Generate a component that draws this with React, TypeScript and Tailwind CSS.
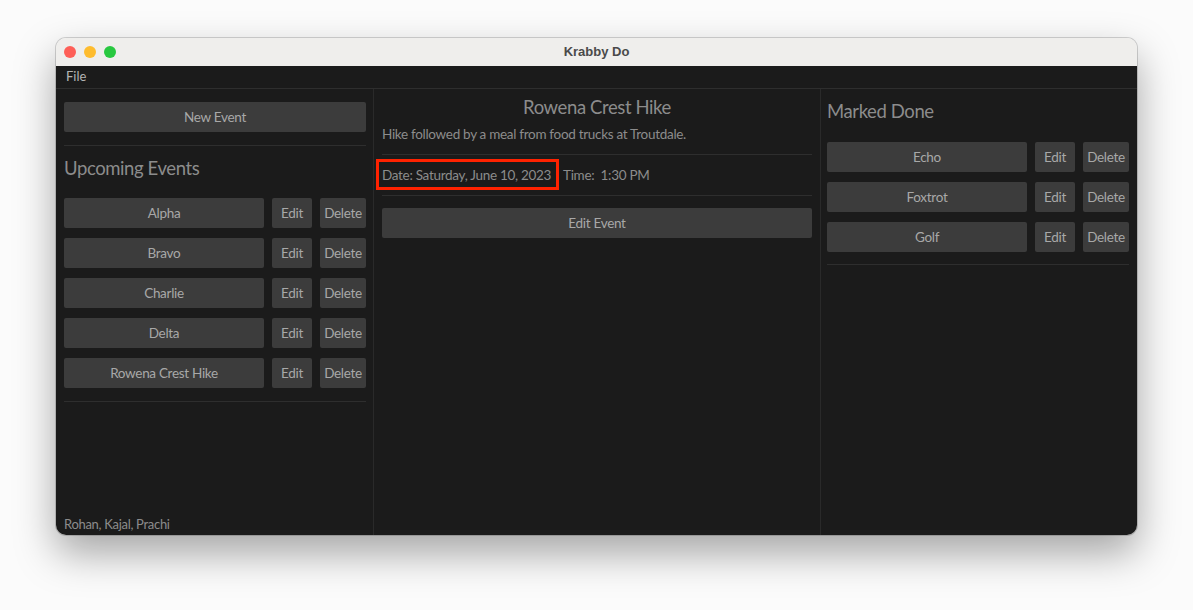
import React from 'react';

const font = { fontFamily: 'Lato, "Open Sans", sans-serif' };

const Separator = () => <div className="h-px bg-[#2e2e2e] w-full" />;

const EventRow = ({ name }: { name: string }) => (
  <div className="flex gap-2 h-[30px]">
    <button className="flex-1 rounded-[2px] bg-[#3c3c3c] text-[13.5px] tracking-[-0.3px] text-[#a8a8a8]">{name}</button>
    <button className="w-[40px] rounded-[2px] bg-[#3c3c3c] text-[13.5px] tracking-[-0.3px] text-[#a8a8a8]">Edit</button>
    <button className="w-[46px] rounded-[2px] bg-[#3c3c3c] text-[13.5px] tracking-[-0.3px] text-[#a8a8a8]">Delete</button>
  </div>
);

export default function App() {
  const upcoming = ['Alpha', 'Bravo', 'Charlie', 'Delta', 'Rowena Crest Hike'];
  const done = ['Echo', 'Foxtrot', 'Golf'];

  return (
    <div className="w-[1193px] h-[610px] bg-[#fbfbfb] pt-[38px] pl-[56px]" style={font}>
      <div className="w-[1081px] h-[497px] rounded-[10px] overflow-hidden flex flex-col shadow-[0_0_0_1px_rgba(0,0,0,0.16),0_18px_40px_rgba(0,0,0,0.35)]">
        {/* title bar */}
        <div className="h-[28px] bg-[#efeeec] flex items-center relative shrink-0">
          <div className="flex gap-2 pl-[8px]">
            <span className="w-3 h-3 rounded-full bg-[#fe5f57]" />
            <span className="w-3 h-3 rounded-full bg-[#febc2e]" />
            <span className="w-3 h-3 rounded-full bg-[#28c840]" />
          </div>
          <div className="absolute inset-0 flex items-center justify-center text-[13px] font-bold text-[#4a4a4a]" style={{ fontFamily: '"Liberation Sans", sans-serif' }}>
            Krabby Do
          </div>
        </div>

        {/* menu bar */}
        <div className="h-[23px] bg-[#1b1b1b] flex items-center px-[10px] text-[13px] text-[#b4b4b4] shrink-0 border-b border-[#2e2e2e]">
          File
        </div>

        {/* panels */}
        <div className="flex flex-1 bg-[#1b1b1b] min-h-0">
          {/* left */}
          <div className="w-[318px] border-r border-[#2a2a2a] pl-[8px] pr-[7px] pt-[13px] pb-[3px] flex flex-col">
            <button className="h-[30px] w-full rounded-[2px] bg-[#3c3c3c] text-[13.5px] tracking-[-0.3px] text-[#a8a8a8]">New Event</button>
            <div className="mt-[13px]"><Separator /></div>
            <div className="h-[52px] pt-[10px] leading-[24px] text-[18.5px] tracking-[-0.4px] text-[#8c8c8c]">Upcoming Events</div>
            <div className="flex flex-col gap-[10px]">
              {upcoming.map(n => <EventRow key={n} name={n} />)}
            </div>
            <div className="mt-[13px]"><Separator /></div>
            <div className="mt-auto leading-[16px] text-[13px] tracking-[-0.3px] text-[#8c8c8c]">Rohan, Kajal, Prachi</div>
          </div>

          {/* center */}
          <div className="w-[447px] border-r border-[#2a2a2a] pl-[8px] pr-[8px] pt-[8px] flex flex-col">
            <div className="h-[22px] flex items-center justify-center text-[18.5px] tracking-[-0.4px] text-[#8c8c8c]">Rowena Crest Hike</div>
            <div className="h-[22px] mt-[4px] flex items-center text-[13.5px] tracking-[-0.3px] text-[#8c8c8c]">Hike followed by a meal from food trucks at Troutdale.</div>
            <div className="mt-[9px]"><Separator /></div>
            <div className="h-[40px] flex items-center gap-[12px] text-[13.5px] tracking-[-0.3px] text-[#8c8c8c]">
              <div className="relative leading-[20px]">
                <span>Date: Saturday, June 10, 2023</span>
                <div className="absolute -left-[6px] -right-[8px] -top-[6px] -bottom-[5px] border-[3px] border-[#ff2200]" />
              </div>
              <span className="whitespace-pre">Time:  1:30 PM</span>
            </div>
            <Separator />
            <button className="mt-[12px] h-[30px] w-full rounded-[2px] bg-[#3c3c3c] text-[13.5px] tracking-[-0.3px] text-[#a8a8a8]">Edit Event</button>
          </div>

          {/* right */}
          <div className="flex-1 pl-[6px] pr-[8px] pt-[8px] flex flex-col">
            <div className="h-[30px] flex items-center text-[18.5px] tracking-[-0.4px] text-[#8c8c8c]">Marked Done</div>
            <div className="mt-[15px] flex flex-col gap-[10px]">
              {done.map(n => <EventRow key={n} name={n} />)}
            </div>
            <div className="mt-[12px]"><Separator /></div>
          </div>
        </div>
      </div>
    </div>
  );
}
